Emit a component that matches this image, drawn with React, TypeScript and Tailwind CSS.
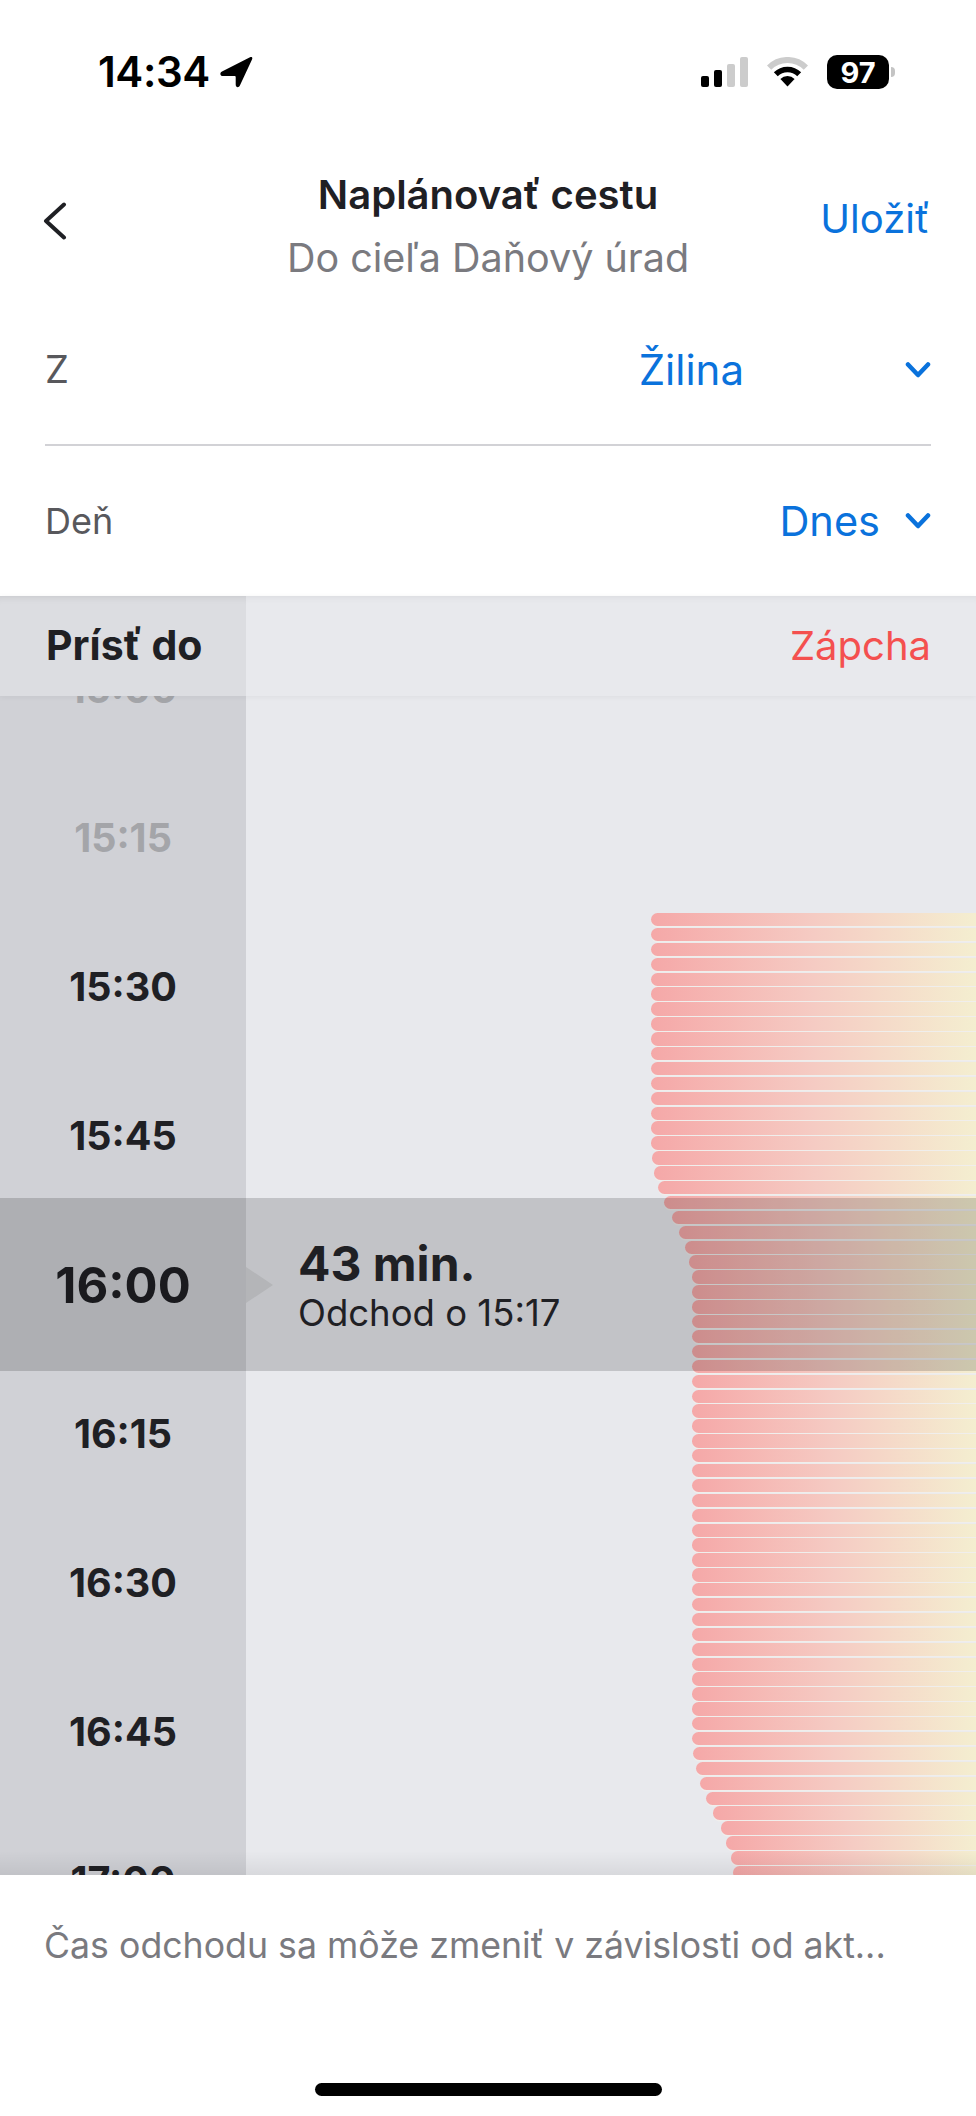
const times = [
  { label: "15:00", muted: true },
  { label: "15:15", muted: true },
  { label: "15:30" },
  { label: "15:45" },
  { label: "16:00", active: true },
  { label: "16:15" },
  { label: "16:30" },
  { label: "16:45" },
  { label: "17:00" },
]

// left edge of each traffic bar, page x
const barStarts = [
  ...Array(16).fill(651),
  652, 654, 658, 664, 672, 679, 685, 689, 692,
  ...Array(31).fill(692),
  693, 696, 700, 706, 713, 721, 726, 731, 733,
]

function StatusBar() {
  return (
    <div className="flex h-[144px] items-center justify-between pl-[98px] pr-[81px]">
      <div className="flex items-center gap-[9px]">
        <span className="text-[42px] font-semibold leading-none tracking-[-0.4px] text-black">14:34</span>
        <svg width="34" height="32" viewBox="0 0 34 32">
          <path d="M31 1.2 3 15.6c-2.6 1.4-2 4.4 1 4.4h11.5c.8 0 1.2.4 1.2 1.2V28.6c0 3 3 3.6 4.2 1L33 3.4c.9-1.9-.2-3.100-2-2.200Z" fill="#000" />
        </svg>
      </div>
      <div className="flex items-center">
        <div className="flex h-[30px] items-end gap-[5px]">
          <div className="h-[11px] w-[8px] rounded-[2px] bg-black" />
          <div className="h-[17px] w-[8px] rounded-[2px] bg-black" />
          <div className="h-[23px] w-[8px] rounded-[2px] bg-[#cccccc]" />
          <div className="h-[30px] w-[8px] rounded-[2px] bg-[#cccccc]" />
        </div>
        <svg className="ml-[19px]" width="41" height="30" viewBox="0 0 41 30" fill="none">
          <path d="M2.100 10.600a26 26 0 0 1 36.800 0" stroke="#cccccc" strokeWidth="6" />
          <path d="M8.800 17.300a16.500 16.500 0 0 1 23.400 0" stroke="#000" strokeWidth="5.500" />
          <path d="M13.400 21.900a10 10 0 0 1 14.200 0l-7.100 7.600Z" fill="#000" />
        </svg>
        <div className="ml-[19px] flex h-[34px] w-[62px] items-center justify-center rounded-[10px] bg-black text-[29px] font-bold leading-none text-white">97</div>
        <div className="ml-[2px] h-[10px] w-[4px] rounded-r-full bg-[#c4c4c4]" />
      </div>
    </div>
  )
}

function NavBar() {
  return (
    <div className="relative flex h-[151px] flex-col items-center pt-[20px]">
      <svg className="absolute left-[43px] top-[58px]" width="24" height="38" viewBox="0 0 24 38" fill="none">
        <path d="M21 2.500 3 19l18 16.500" stroke="#1f2024" strokeWidth="4" strokeLinecap="round" strokeLinejoin="round" />
      </svg>
      <div className="h-[62px] text-[40px] font-semibold leading-[62px] text-[#1f2024]">Naplánovať cestu</div>
      <div className="h-[64px] text-[39.500px] leading-[64px] text-[#7a7a7f]">Do cieľa Daňový úrad</div>
      <span className="absolute right-[46px] top-[52px] text-[40px] leading-[46px] text-[#0a72dc]">Uložiť</span>
    </div>
  )
}

function Chevron() {
  return (
    <svg width="26" height="18" viewBox="0 0 26 18" fill="none">
      <path d="M3 3.500 13 14 23 3.500" stroke="#0a72dc" strokeWidth="4.500" strokeLinecap="round" strokeLinejoin="round" />
    </svg>
  )
}

function Filters() {
  return (
    <div className="px-[45px]">
      <div className="flex h-[151px] items-center justify-between border-b-2 border-[#d2d2d6]">
        <span className="text-[38px] text-[#58585c]">Z</span>
        <div className="flex items-center text-[42px] text-[#0a72dc]">
          <span>Žilina</span>
          <span className="ml-[161px]"><Chevron /></span>
        </div>
      </div>
      <div className="flex h-[150px] items-center justify-between">
        <span className="text-[36px] text-[#58585c]">Deň</span>
        <div className="flex items-center text-[41.500px] text-[#0a72dc]">
          <span>Dnes</span>
          <span className="ml-[25px]"><Chevron /></span>
        </div>
      </div>
    </div>
  )
}

function TimeColumn() {
  return (
    <div className="-mt-[81px] w-[246px] shrink-0">
      {times.map((t) => (
        <div key={t.label} className="flex h-[149px] items-center justify-center">
          <span
            className={
              t.active
                ? "text-[49px] font-bold leading-none text-[#1f2024]"
                : t.muted
                  ? "text-[39.500px] font-bold leading-none text-[#a4a5a9]"
                  : "text-[39.500px] font-bold leading-none text-[#1f2024]"
            }
          >
            {t.label}
          </span>
        </div>
      ))}
    </div>
  )
}

function TrafficBars() {
  return (
    <div className="flex-1 pt-[217px]">
      {barStarts.map((x, i) => (
        <div
          key={i}
          className="mb-[1.500px] h-[13.400px] rounded-l-[6.700px] bg-gradient-to-r from-[#f5a8a8] via-[#f5cbc3] to-[#f4eed0] shadow-[0_1.500px_0_#f0eeec]"
          style={{ marginLeft: x - 246 }}
        />
      ))}
    </div>
  )
}

function Chart() {
  return (
    <div className="flex h-[1279px] flex-col bg-[#e8e9ed]">
      <div className="relative z-10 flex h-[100px] shrink-0 shadow-[0_1px_6px_rgba(0,0,0,0.05)]">
        <div className="flex w-[246px] items-center bg-[#dcdde1] pl-[46px] text-[41px] font-bold text-[#1f2024] shadow-[inset_0_8px_8px_-8px_rgba(0,0,0,0.12)]">
          Prísť do
        </div>
        <div className="flex flex-1 items-center justify-end bg-[#e8e9ed] pr-[45px] text-[40px] text-[#f4504f] shadow-[inset_0_8px_8px_-8px_rgba(0,0,0,0.08)]">
          Zápcha
        </div>
      </div>
      <div className="relative flex flex-1 overflow-hidden">
        <div className="bg-[#d0d1d6]">
          <TimeColumn />
        </div>
        <TrafficBars />
        {/* selected row lies over the bars */}
        <div className="absolute inset-x-0 top-[502px] flex h-[173px] items-center bg-black/[0.16] pl-[298px]">
          <div
            className="absolute left-[246px] top-[69px] h-[36px] w-[27px] bg-[#b4b5b8]"
            style={{ clipPath: "polygon(0 0, 100% 50%, 0 100%)" }}
          />
          <div className="flex flex-col text-[#1f2024]">
            <span className="text-[48px] font-bold leading-[56px]">43 min.</span>
            <span className="text-[36.500px] leading-[42px]">Odchod o 15:17</span>
          </div>
        </div>
        <div className="absolute inset-x-0 bottom-0 h-[24px] bg-gradient-to-b from-transparent to-black/[0.07]" />
      </div>
    </div>
  )
}

function Footer() {
  return (
    <div className="relative flex-1 bg-white">
      <p className="pl-[44px] pt-[46px] text-[35.700px] leading-[48px] text-[#7a7a7f]">Čas odchodu sa môže zmeniť v závislosti od akt...</p>
      <div className="absolute bottom-[20px] left-[315px] h-[13px] w-[347px] rounded-full bg-black" />
    </div>
  )
}

export default function App() {
  return (
    <div className="flex h-[2116px] w-full flex-col overflow-hidden bg-white font-['Inter',sans-serif]">
      <StatusBar />
      <NavBar />
      <Filters />
      <Chart />
      <Footer />
    </div>
  )
}
